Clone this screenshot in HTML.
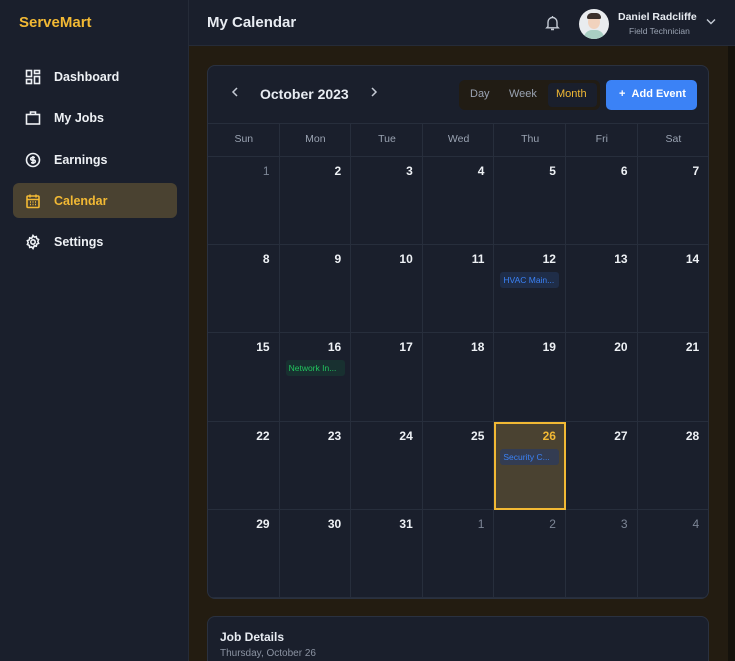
<!DOCTYPE html>
<html><head><meta charset="utf-8"><style>
*{box-sizing:border-box;margin:0;padding:0}
html,body{width:735px;height:661px;overflow:hidden}
body{background:#231c11;font-family:"Liberation Sans",sans-serif;color:#e8ecf2;position:relative}
.side{position:absolute;left:0;top:0;width:189px;height:661px;background:#1a1f2c;border-right:1px solid #252b38}
.logo{position:absolute;left:19px;top:14px;font-size:15px;font-weight:bold;color:#f2b934}
.nav{position:absolute;left:13px;width:164px;height:35px;border-radius:6px;display:flex;align-items:center;font-size:12.5px;font-weight:bold;color:#eef1f5}
.nav svg{position:absolute;left:12px}
.nav span{position:absolute;left:41px}
.nav.act{background:#4a4231;color:#f2b934}
.hdr{position:absolute;left:189px;top:0;width:546px;height:46px;background:#1a1f2c;border-bottom:1px solid #252b38}
.title{position:absolute;left:18px;top:14px;font-size:15px;font-weight:bold}
.card{position:absolute;left:207px;top:65px;width:502px;height:534px;background:#1a1f2c;border:1px solid #2a3140;border-radius:8px;overflow:hidden}
.cell{position:absolute;border-right:1px solid #272e3c;border-bottom:1px solid #272e3c;text-align:right;padding:7px 9px 0 0;font-size:12px;font-weight:bold;color:#eef1f5}
.cell.o{color:#7d8696;font-weight:normal}
.dn{position:absolute;top:67px;font-size:10.5px;color:#9aa3b2;text-align:center}
.chip{position:absolute;left:6px;top:27px;width:59px;height:16px;border-radius:3px;font-size:8.5px;font-weight:normal;text-align:left;padding:3px 0 0 3px;white-space:nowrap}
.scroll{position:absolute;left:728px;top:46px;width:7px;height:615px;background:#15120c}
</style></head><body>
<div class="side">
 <div class="logo">ServeMart</div>
 <div class="nav" style="top:59px"><svg width="16" height="16" viewBox="0 0 16 16" fill="none" stroke="#eef1f5" stroke-width="1.6"><rect x="1.5" y="1.5" width="5" height="6"/><rect x="9.5" y="1.5" width="5" height="3"/><rect x="1.5" y="10.5" width="5" height="4"/><rect x="9.5" y="7.5" width="5" height="7"/></svg><span>Dashboard</span></div>
 <div class="nav" style="top:100px"><svg width="16" height="16" viewBox="0 0 16 16" fill="none" stroke="#eef1f5" stroke-width="1.6"><rect x="1.5" y="4.5" width="13" height="9.5"/><path d="M5.5 4.5V2h5v2.5"/></svg><span>My Jobs</span></div>
 <div class="nav" style="top:142px"><svg width="16" height="16" viewBox="0 0 16 16" fill="none" stroke="#eef1f5" stroke-width="1.6"><circle cx="8" cy="8" r="6.5"/><path d="M10 5.5H7a1.3 1.3 0 0 0 0 2.6h2a1.3 1.3 0 0 1 0 2.6H6M8 4v8"/></svg><span>Earnings</span></div>
 <div class="nav act" style="top:183px"><svg width="16" height="16" viewBox="0 0 16 16" fill="none" stroke="#f2b934" stroke-width="1.6"><rect x="2" y="3" width="12" height="11.5" rx="1"/><path d="M2 6.5h12M5 1.5v3M11 1.5v3M5 9h1M7.5 9h1M10 9h1M5 11.5h1M7.5 11.5h1M10 11.5h1"/></svg><span>Calendar</span></div>
 <div class="nav" style="top:224px"><svg width="16" height="16" viewBox="0 0 16 16" fill="none" stroke="#eef1f5" stroke-width="1.6"><circle cx="8" cy="8" r="2.2"/><path d="M8 1.5l1.3 1.6 2-.5.4 2 1.9.9-.8 1.9.8 1.9-1.9.9-.4 2-2-.5L8 14.5l-1.3-1.6-2 .5-.4-2-1.9-.9.8-1.9-.8-1.9 1.9-.9.4-2 2 .5z"/></svg><span>Settings</span></div>
</div>
<div class="hdr">
 <div class="title">My Calendar</div>
 <svg style="position:absolute;left:356px;top:15px" width="15" height="16" viewBox="0 0 15 16" fill="none" stroke="#c4cad4" stroke-width="1.4"><path d="M3 11.5V7a4.5 4.5 0 0 1 9 0v4.5l1.2 1.3H1.8zM6 14.5h3M7.5 1v1.5"/></svg>
 <div style="position:absolute;left:390px;top:9px;width:30px;height:30px;border-radius:50%;background:#e9ecef;overflow:hidden"><div style="position:absolute;left:9px;top:6px;width:12px;height:14px;border-radius:50%;background:#f1d2bd"></div><div style="position:absolute;left:8px;top:4px;width:14px;height:6px;border-radius:6px 6px 2px 2px;background:#3a302c"></div><div style="position:absolute;left:5px;top:21px;width:20px;height:12px;border-radius:8px 8px 0 0;background:#a9cfc3"></div></div>
 <div style="position:absolute;left:429px;top:11px;font-size:10.5px;font-weight:bold">Daniel Radcliffe</div>
 <div style="position:absolute;left:440px;top:26px;font-size:8.5px;color:#9aa3b2">Field Technician</div>
 <svg style="position:absolute;left:517px;top:18px" width="10" height="7" viewBox="0 0 10 7" fill="none" stroke="#c4cad4" stroke-width="1.4"><path d="M1 1.5l4 4 4-4"/></svg>
</div>
<div class="scroll"></div>
<div class="card">
 <svg style="position:absolute;left:23px;top:21px" width="8" height="10" viewBox="0 0 8 10" fill="none" stroke="#c4cad4" stroke-width="1.5"><path d="M6 1L2 5l4 4"/></svg>
 <div style="position:absolute;left:52px;top:20px;font-size:14px;font-weight:bold">October 2023</div>
 <svg style="position:absolute;left:162px;top:21px" width="8" height="10" viewBox="0 0 8 10" fill="none" stroke="#c4cad4" stroke-width="1.5"><path d="M2 1l4 4-4 4"/></svg>
 <div style="position:absolute;left:251px;top:14px;width:141px;height:30px;background:#211c14;border-radius:6px"></div>
 <div style="position:absolute;left:262px;top:22px;font-size:11px;color:#9aa3b2">Day</div>
 <div style="position:absolute;left:301px;top:22px;font-size:11px;color:#9aa3b2">Week</div>
 <div style="position:absolute;left:340px;top:17px;width:49px;height:24px;background:#1a1f2c;border-radius:4px"></div>
 <div style="position:absolute;left:348px;top:22px;font-size:11px;color:#f2b934">Month</div>
 <div style="position:absolute;left:398px;top:14px;width:91px;height:30px;background:#3b82f6;border-radius:5px;font-size:11px;font-weight:bold;color:#fff;padding:8px 0 0 13px">+&nbsp;&nbsp;Add Event</div>
 <div style="position:absolute;left:0;top:57px;width:502px;height:1px;background:#272e3c"></div>
 <div style="position:absolute;left:0;top:90px;width:502px;height:1px;background:#272e3c"></div>
 <div id="g"></div>
</div>
<div style="position:absolute;left:207px;top:616px;width:502px;height:60px;background:#1a1f2c;border:1px solid #2a3140;border-radius:8px">
 <div style="position:absolute;left:12px;top:13px;font-size:12px;font-weight:bold">Job Details</div>
 <div style="position:absolute;left:12px;top:31px;font-size:10px;color:#8b93a2">Thursday, October 26</div>
</div>
<script>
(function(){
var g=document.getElementById('g'),h='';
var names=['Sun','Mon','Tue','Wed','Thu','Fri','Sat'];
var W=71.6;
for(var i=0;i<7;i++){h+='<div class="dn" style="left:'+(i*W)+'px;width:'+W+'px">'+names[i]+'</div>';
 if(i<6)h+='<div style="position:absolute;left:'+((i+1)*W-1)+'px;top:58px;width:1px;height:33px;background:#272e3c"></div>';}
var days=[];for(var k=1;k<=31;k++)days.push([k,false]);days.push([1,true],[2,true],[3,true],[4,true]);
for(var r=0;r<5;r++)for(var c=0;c<7;c++){var idx=r*7+c,dd=days[idx];
 var ty=91+r*88.2, lx=c*W;
 var cls='cell'+(dd[1]||idx==0?' o':'');
 var extra='',st='';
 if(idx==25){st='background:#4a4231;outline:2px solid #f2b934;outline-offset:-2px;color:#f2b934;z-index:2;';extra='<div class="chip" style="background:#333c52;color:#3b82f6">Security C...</div>';}
 if(idx==11)extra='<div class="chip" style="background:#1f2d48;color:#3b82f6">HVAC Main...</div>';
 if(idx==15)extra='<div class="chip" style="background:#183030;color:#22c55e">Network In...</div>';
 h+='<div class="'+cls+'" style="'+st+'left:'+lx+'px;top:'+ty+'px;width:'+W+'px;height:88.2px">'+dd[0]+extra+'</div>';}
g.innerHTML=h;
})();
</script>
</body></html>
